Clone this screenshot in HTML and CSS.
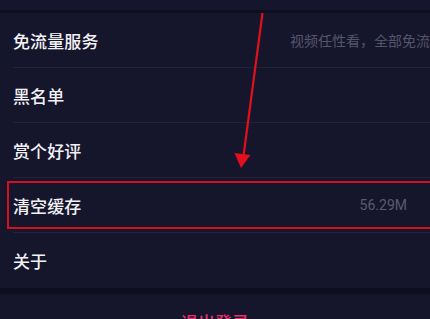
FILE: index.html
```
<!DOCTYPE html>
<html lang="zh">
<head>
<meta charset="utf-8">
<link rel="stylesheet" href="styles.css">
</head>
<body>
<div class="page">
  <div class="top-band"></div>
  <div class="gap small"></div>
  <ul class="list">
    <li class="row"><span class="label">免流量服务</span><span class="value hint">视频任性看，全部免流量</span></li>
    <li class="row"><span class="label">黑名单</span></li>
    <li class="row"><span class="label">赏个好评</span></li>
    <li class="row"><span class="label">清空缓存</span><span class="value">56.29M</span></li>
    <li class="row last"><span class="label">关于</span></li>
  </ul>
  <div class="gap"></div>
  <div class="logout">退出登录</div>

  <div class="highlight"></div>
  <svg class="arrow" width="430" height="319" viewBox="0 0 430 319">
    <line x1="262.5" y1="13" x2="243.5" y2="156" stroke="#e0101c" stroke-width="2.2"/>
    <polygon points="234.5,153 250.5,155 241,168" fill="#e0101c"/>
  </svg>
</div>
</body>
</html>
```
FILE: styles.css
```
html, body {
  margin: 0;
  padding: 0;
  background: #15152c;
  overflow: hidden;
}
.page {
  position: relative;
  width: 430px;
  height: 319px;
  overflow: hidden;
  font-family: "Noto Sans CJK SC", "Noto Sans", Roboto, sans-serif;
  background: #15152c;
}
.top-band {
  height: 10px;
  background: #15152c;
}
.gap {
  height: 7px;
  background: #0e0e1f;
}
.gap.small {
  height: 3px;
}
.list {
  list-style: none;
  margin: 0;
  padding: 0 0 0 13px;
  background: #15152c;
}
.row {
  display: flex;
  align-items: center;
  height: 54px;
  border-bottom: 1px solid #222239;
  padding-right: 23px;
  white-space: nowrap;
}
.row.last {
  border-bottom: none;
  height: 55px;
}
.label {
  color: #f2f2f5;
  font-size: 17px;
  font-weight: 500;
  letter-spacing: 0.1px;
}
.value {
  margin-left: auto;
  color: #5b5b6d;
  font-size: 14px;
  font-family: Roboto, "Noto Sans CJK SC", sans-serif;
}
.value.hint {
  font-family: "Noto Sans CJK SC", sans-serif;
  color: #55556a;
  margin-right: -37px;
}
.logout {
  height: 55px;
  display: flex;
  align-items: center;
  justify-content: center;
  color: #e8306e;
  font-size: 17px;
  font-weight: 500;
  background: #15152c;
  margin-top: -1px;
}
.highlight {
  position: absolute;
  left: 7px;
  top: 181px;
  width: 440px;
  height: 44px;
  border: 2px solid #d40f1e;
}
.arrow {
  position: absolute;
  left: 0;
  top: 0;
}
```
